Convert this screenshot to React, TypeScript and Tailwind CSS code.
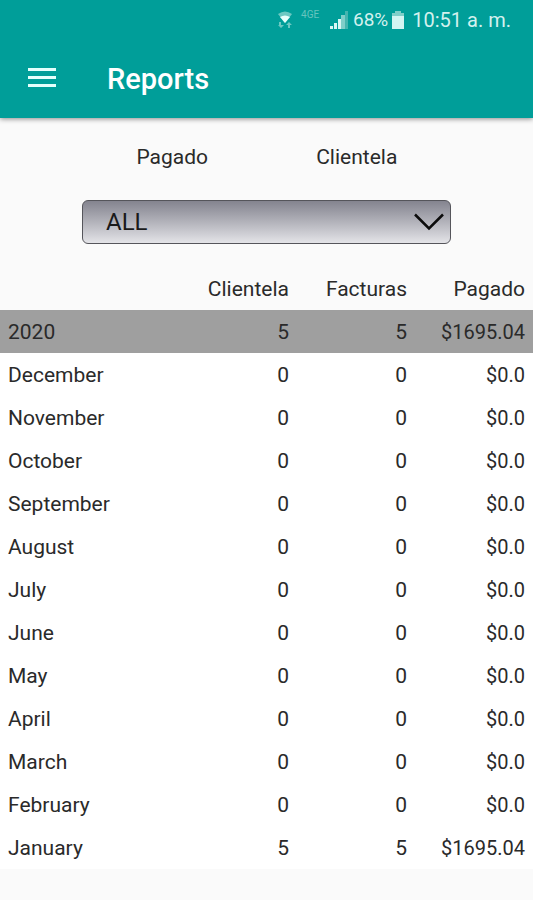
import { useState } from "react";

type Row = { label: string; clients: number; invoices: number; paid: string };

const year: Row = { label: "2020", clients: 5, invoices: 5, paid: "$1695.04" };

const months: Row[] = [
  "December",
  "November",
  "October",
  "September",
  "August",
  "July",
  "June",
  "May",
  "April",
  "March",
  "February",
]
  .map((label) => ({ label, clients: 0, invoices: 0, paid: "$0.0" }))
  .concat([{ label: "January", clients: 5, invoices: 5, paid: "$1695.04" }]);

function StatusBar() {
  return (
    <div className="flex h-10 items-center justify-end pr-[22px] text-xl text-[#d3f1ee]">
      <svg width="16" height="20" viewBox="0 0 16 20" className="mr-2" aria-hidden="true">
        <path d="M1 4Q8-1 15 4L8 13Z" fill="#6cc8c2" />
        <path d="M3 7Q8 4 13 7L8 13Z" fill="#e6fffc" />
        <path d="M4 12v3H7L4 18L1 15H2V12ZM11 18V15H9L12 12L15 15H13V18Z" fill="#6cc8c2" />
      </svg>
      <span className="mr-1 flex h-5 w-6 items-start text-[10px] leading-[10px] text-[#66c4be]">
        4GE
      </span>
      <svg width="20" height="19" viewBox="0 0 20 19" className="mr-1" aria-hidden="true">
        <path d="M1 15h3v3H1ZM5 12h3v6H5ZM9 8h3v10H9Z" fill="#d9f7f4" />
        <path d="M12 4h4v14h-4Z" fill="#7fcfc9" />
        <path d="M16 0h3v18h-3Z" fill="#45b5af" />
      </svg>
      <span className="text-[19px]">68%</span>
      <svg width="12" height="19" viewBox="0 0 12 19" className="ml-1 mr-2" aria-hidden="true">
        <path d="M3 0h6v2h3v4H0V2h3Z" fill="#7fcfc9" />
        <path d="M0 5h12v13H0Z" fill="#d3f5f2" />
      </svg>
      <span>10:51 a. m.</span>
    </div>
  );
}

function Cells({ row }: { row: Row }) {
  return (
    <>
      <th scope="row" className="pl-2 text-left font-normal">{row.label}</th>
      <td className="pr-2 text-right">{row.clients}</td>
      <td className="pr-2 text-right">{row.invoices}</td>
      <td className="pr-2 text-right text-xl">{row.paid}</td>
    </>
  );
}

export default function App() {
  const [filter, setFilter] = useState("ALL");

  return (
    <div className="min-h-screen bg-[#fafafa] font-[Roboto,sans-serif] text-[21px] leading-6 text-[#2a2a2a]">
      <header className="bg-[#009e99] shadow-[0_1px_5px_rgba(0,0,0,0.45)]">
        <StatusBar />
        <div className="flex h-[78px] items-center pl-[27px]">
          <button type="button" aria-label="Open menu" className="mr-[50px]">
            <svg width="30" height="24" viewBox="0 0 30 24" className="block" aria-hidden="true">
              <path d="M1 2.5h28M1 10.5h28M1 18.5h28" stroke="#e4fffc" strokeWidth="3" />
            </svg>
          </button>
          <h1 className="text-[29px] font-medium leading-9 text-white">Reports</h1>
        </div>
      </header>

      <main>
        <div className="flex h-[82px] pr-[84px] pl-20">
          <button type="button" className="flex-1 pb-1">Pagado</button>
          <button type="button" className="flex-1 pb-1">Clientela</button>
        </div>

        <div className="mx-[82px] grid items-center">
          <select
            aria-label="Report filter"
            value={filter}
            onChange={(event) => setFilter(event.target.value)}
            className="col-start-1 row-start-1 h-11 w-full appearance-none rounded-md border border-[#55555b] bg-linear-to-b from-[#84848f] to-[#e4e4e8] pl-[23px] text-2xl text-[#1a1a1a]"
          >
            <option>ALL</option>
            <option>2020</option>
          </select>
          <svg
            width="30"
            height="18"
            viewBox="0 0 30 18"
            className="pointer-events-none col-start-1 row-start-1 mr-[7px] justify-self-end"
            aria-hidden="true"
          >
            <path d="M1 1.5L15 15.5L29 1.5" fill="none" stroke="#0c0c0c" strokeWidth="2.5" />
          </svg>
        </div>

        <table className="mt-6 w-full table-fixed border-collapse">
          <thead>
            <tr className="h-[42px]">
              <td />
              <th scope="col" className="w-[118px] pr-2 text-right font-normal">Clientela</th>
              <th scope="col" className="w-[118px] pr-2 text-right font-normal">Facturas</th>
              <th scope="col" className="w-[118px] pr-2 text-right font-normal">Pagado</th>
            </tr>
          </thead>
          <tbody>
            <tr className="h-[43px] bg-[#9f9f9f]">
              <Cells row={year} />
            </tr>
            {months.map((row) => (
              <tr key={row.label} className="h-[43px] bg-white">
                <Cells row={row} />
              </tr>
            ))}
          </tbody>
        </table>
      </main>
    </div>
  );
}
